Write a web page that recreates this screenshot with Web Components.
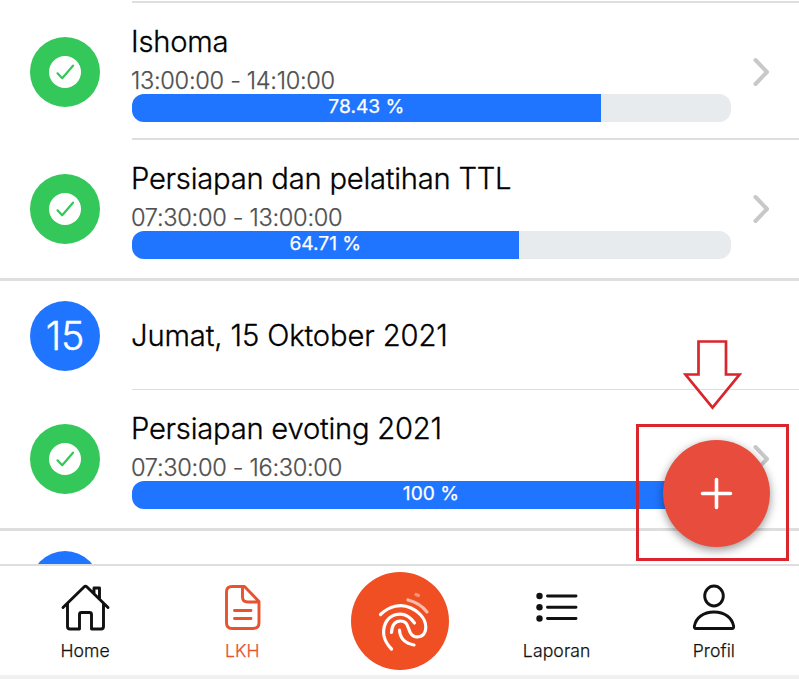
<!DOCTYPE html>
<html lang="id">
<head>
<meta charset="utf-8">
<title>LKH</title>
<style>
html,body{margin:0;height:100%;overflow:hidden;background:#fff}
body{font-family:Inter,"Liberation Sans",sans-serif;color:#000}
</style>
</head>
<body>
<lkh-app></lkh-app>
<script>
const define = (name, css, html) => customElements.define(name, class extends HTMLElement {
  constructor() {
    super();
    const t = document.createElement('template');
    t.innerHTML = `<style>*{box-sizing:border-box}${css}</style>${typeof html === 'function' ? html(this) : html}`;
    this.attachShadow({mode: 'open'}).append(t.content.cloneNode(true));
  }
});

define('status-check', ':host{display:block;width:70px;height:70px;border-radius:50%;background:#34c759}svg{display:block}',
  `<svg width="70" height="70"><circle cx="35" cy="35" r="16" fill="#fff"/><path d="M27.500 36.300l4.700 4.900L43 28.700" fill="none" stroke="#34c759" stroke-width="2.200" stroke-linecap="round" stroke-linejoin="round"/></svg>`);

define('day-badge', ':host{display:grid;place-items:center;width:70px;height:70px;border-radius:50%;background:#1f75ff;color:#fff;font-size:39.5px;font-weight:300;-webkit-text-stroke:.4px currentColor;line-height:70px;letter-spacing:-.3px}', '<slot></slot>');

define('progress-bar', ':host{display:block;width:599px;height:27.5px;border-radius:12px;background:#e7ebee;overflow:hidden}.fill{height:100%;width:var(--value);background:#1f75ff;color:#fff;text-align:center;font-size:19.2px;font-weight:400;-webkit-text-stroke:.25px currentColor;line-height:25px;letter-spacing:0;white-space:nowrap}', '<div class="fill"><slot></slot></div>');

define('chevron-icon', ':host{display:block;width:20px;height:32px}svg{display:block}', '<svg width="20" height="32"><path d="M4.500 4l11.500 12L4.500 28" fill="none" stroke="#c8c8ca" stroke-width="4" stroke-linecap="round" stroke-linejoin="round"/></svg>');

define('activity-row', `
:host{display:grid;grid-template-columns:102px 1fr;padding-left:30px;height:var(--h,137px)}
status-check{margin-top:34px}
.body{display:grid;grid-template-columns:621px 1fr;border-bottom:var(--line,2px solid #dedede)}
.text{padding-top:20px}
.title{font-size:29.2px;line-height:38px;font-weight:300;-webkit-text-stroke:.3px currentColor;letter-spacing:-.24px;white-space:nowrap;text-indent:-1px}
.time{font-size:23.6px;line-height:30px;height:33px;padding-top:5px;font-weight:300;-webkit-text-stroke:.25px currentColor;color:#505050;letter-spacing:-.3px;white-space:nowrap;text-indent:-1px}
progress-bar{margin-left:-.5px}
chevron-icon{margin:53px 0 0 -2px}`,
`<status-check></status-check><div class="body"><div class="text"><div class="title"><slot name="title"></slot></div><div class="time"><slot name="time"></slot></div><progress-bar><slot name="percent"></slot></progress-bar></div><chevron-icon></chevron-icon></div>`);

define('date-row', `
:host{display:grid;grid-template-columns:102px 1fr;padding-left:30px;height:109px}
day-badge{margin-top:20px}
.label{border-bottom:1.5px solid #dedede;font-size:29.2px;font-weight:300;-webkit-text-stroke:.3px currentColor;line-height:109px;height:109px;white-space:nowrap;letter-spacing:-.12px;text-indent:-1px}`,
`<day-badge><slot name="day"></slot></day-badge><div class="label"><slot></slot></div>`);

define('day-group', ':host{display:block;border-bottom:3px solid #dedede}', '<slot></slot>');

const icons = {
  home: '<path d="M3 24.500L24 4Q25.500 2.500 27 4L48 24.500M7.500 20.500V43.500Q7.500 46 10 46H19.500V31.500Q19.500 29.500 21.500 29.500H29.500Q31.500 29.500 31.500 31.500V46H41Q43.500 46 43.500 43.500V20.500M34 10.500V5H39.500V15.500"/>',
  file: '<path d="M27.500 3.500H15Q9.500 3.500 9.500 9V39.500Q9.500 45.500 15 45.500H36Q42 45.500 42 39.500V18.500ZM25.500 4V14Q25.500 19 31 19H42M17.500 27.500H34M17.500 35.500H34"/>',
  list: '<path d="M16.500 13H45M16.500 24.300H45M16.500 35.500H45"/><g fill="currentColor" stroke="none"><circle cx="8.500" cy="13" r="3.200"/><circle cx="8.500" cy="24.300" r="3.200"/><circle cx="8.500" cy="35.500" r="3.200"/></g>',
  user: '<ellipse cx="26" cy="13" rx="9.300" ry="10"/><path d="M8 45.500Q6 45.500 6.400 43C8 35 15 29 26 29S44 35 45.600 43Q46 45.500 44 45.500Z"/>'
};
define('nav-item', `
:host{display:grid;justify-items:center;align-content:start;padding-top:17px;color:#111}
:host([active]){color:#e5532f}
svg{display:block;width:51px;height:50px;overflow:visible;fill:none;stroke:currentColor;stroke-width:2.9;stroke-linecap:round;stroke-linejoin:round}
span{font-size:17.6px;font-weight:300;-webkit-text-stroke:.25px currentColor;line-height:24px;margin-top:6px;letter-spacing:.1px}`,
el => `<svg viewBox="0 0 51 50">${icons[el.getAttribute('icon')]}</svg><span><slot></slot></span>`);

define('scan-button', ':host{display:block;justify-self:center;width:98px;height:98px;border-radius:50%;background:#f04e23;margin-top:6px}svg{display:block}',
`<svg width="98" height="98" fill="none" stroke="#fff" stroke-width="3.200" stroke-linecap="round">
<path d="M29.500 42.500C38 34 50 31 60 36C70 41 76 49 74.500 58C73 66 63 67 59.500 61C56.500 55.500 57 49 49.500 49C43.500 49 41 53 40.500 60.500"/>
<path d="M63.500 51C58 43 51 40.500 43.500 43C35 46 31.500 55 33 64Q34.500 71 40.500 77"/>
<path d="M48.500 58C49 67 55 71.500 63 73"/>
<path d="M57 28Q69 31 76 40" stroke-opacity=".62"/><path d="M65 22.500L67.500 23.500" stroke-opacity=".4"/></svg>`);

define('tab-bar', ':host{position:absolute;left:0;right:0;top:564px;height:115px;background:#fff;border-top:2px solid #dedede;border-bottom:4px solid #f1f1f1;display:grid;grid-template-columns:repeat(5,157.2px);justify-content:center}', '<slot></slot>');

define('fab-button', ':host{position:absolute;left:662.500px;top:440px;width:107px;height:107px;border-radius:50%;background:#e84c3d;box-shadow:0 3px 10px rgba(0,0,0,.42)}svg{display:block}', '<svg width="107" height="107"><path d="M39.500 53.500H67.500M53.500 39.500V67.500" stroke="#fff" stroke-width="3.600" stroke-linecap="round"/></svg>');

define('callout-mark', ':host{position:absolute;left:630px;top:334px;width:169px;height:234px}svg{display:block}', '<svg width="169" height="234" fill="none" stroke="#d9252c" stroke-width="3"><path d="M68.500 7.500H96V40.500H109.500L82.500 73.500L55.500 40.500H68.500Z" stroke-width="2.700"/><rect x="7.500" y="91.500" width="150" height="134"/></svg>');

define('lkh-app', `
:host{display:block;position:relative;width:799px;height:679px;overflow:hidden;background:#fff}
.top{margin-left:132px;height:3px;border-bottom:2px solid #dedede}`,
`<main><day-group><div class="top"></div>
<activity-row style="--value:78.43%"><span slot="title">Ishoma</span><span slot="time">13:00:00 - 14:10:00</span><span slot="percent">78.43 %</span></activity-row>
<activity-row style="--value:64.71%;--h:138px;--line:0"><span slot="title">Persiapan dan pelatihan TTL</span><span slot="time">07:30:00 - 13:00:00</span><span slot="percent">64.71 %</span></activity-row></day-group>
<day-group><date-row><span slot="day">15</span>Jumat, 15 Oktober 2021</date-row>
<activity-row style="--value:100%;--h:138px;--line:0"><span slot="title">Persiapan evoting 2021</span><span slot="time">07:30:00 - 16:30:00</span><span slot="percent">100 %</span></activity-row></day-group>
<date-row></date-row></main>
<tab-bar><nav-item icon="home">Home</nav-item><nav-item icon="file" active>LKH</nav-item><scan-button></scan-button><nav-item icon="list">Laporan</nav-item><nav-item icon="user">Profil</nav-item></tab-bar>
<fab-button></fab-button><callout-mark></callout-mark>`);
</script>
</body>
</html>
